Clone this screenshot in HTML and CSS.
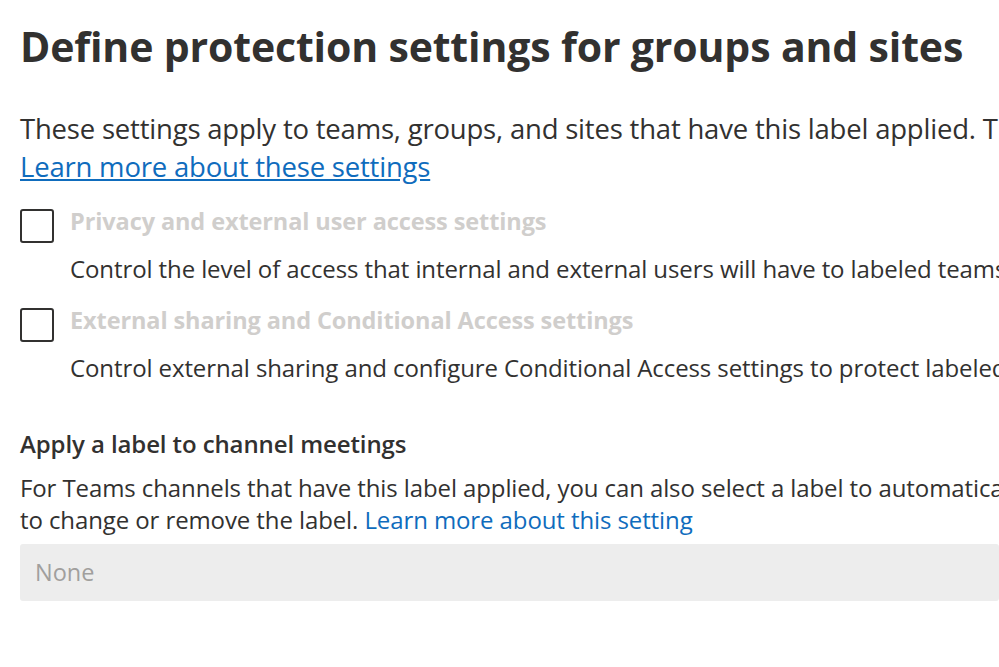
FILE: index.html
```html
<!DOCTYPE html>
<html lang="en">
<head>
    <meta charset="UTF-8">
    <meta name="viewport" content="width=device-width, initial-scale=1.0">
    <title>Define protection settings for groups and sites</title>
    <link rel="stylesheet" href="styles.css">
</head>
<body>

<div class="page">
    <h1 class="title">Define protection settings for groups and sites</h1>

    <p class="intro">
        These settings apply to teams, groups, and sites that have this label applied. They don't apply directly to files stored in those containers.<br>
        <a href="#">Learn more about these settings</a>
    </p>

    <div class="option">
        <span class="checkbox"></span>
        <div class="option-body">
            <div class="option-label">Privacy and external user access settings</div>
            <div class="option-desc">Control the level of access that internal and external users will have to labeled teams and Microsoft 365 Groups.</div>
        </div>
    </div>

    <div class="option option-next">
        <span class="checkbox"></span>
        <div class="option-body">
            <div class="option-label">External sharing and Conditional Access settings</div>
            <div class="option-desc">Control external sharing and configure Conditional Access settings to protect labeled SharePoint sites.</div>
        </div>
    </div>

    <h2 class="section-title">Apply a label to channel meetings</h2>
    <p class="section-text">
        For Teams channels that have this label applied, you can also select a label to automatically apply to channel meetings. Meeting organizers won't be able<br>
        to change or remove the label. <a href="#" class="plain-link">Learn more about this setting</a>
    </p>

    <div class="select">None</div>
</div>

</body>
</html>
```

FILE: styles.css
```css
/* Page */
body {
    margin: 0;
    background-color: #fff;
    color: #323130;
    font-family: "Open Sans", "Noto Sans", sans-serif;
    overflow: hidden;
}
.page {
    padding-left: 20px;
    white-space: nowrap;
}
.title {
    margin: 20px 0 0;
    font-size: 41px;
    line-height: 52px;
    font-weight: 700;
    letter-spacing: -0.15px;
}
.intro {
    margin: 38px 0 0;
    font-size: 27.5px;
    line-height: 38px;
    letter-spacing: -0.2px;
}
.intro a {
    color: #0f6cbd;
}
/* Checkbox options */
.option {
    display: flex;
    margin-top: 23px;
}
.checkbox {
    flex: none;
    width: 30px;
    height: 30px;
    border: 2px solid #323130;
    border-radius: 3px;
    margin-right: 16px;
}
.option-label {
    margin-top: -2px;
    font-size: 23.5px;
    line-height: 28px;
    font-weight: 700;
    color: #d0cecc;
    letter-spacing: -0.1px;
}
.option-desc {
    margin-top: 18px;
    font-size: 24px;
    line-height: 32px;
    letter-spacing: -0.1px;
}
/* Channel meetings section */
.section-title {
    margin: 44px 0 0;
    font-size: 24px;
    line-height: 32px;
    font-weight: 600;
    letter-spacing: -0.1px;
}
.section-text {
    margin: 12px 0 0;
    font-size: 24px;
    line-height: 32px;
    letter-spacing: -0.1px;
}
.plain-link {
    color: #0f6cbd;
    text-decoration: none;
}
.select {
    margin-top: 8px;
    height: 57px;
    padding-left: 15px;
    background-color: #ededed;
    border-radius: 3px;
    color: #a19f9d;
    font-size: 23.5px;
    line-height: 57px;
}
```
